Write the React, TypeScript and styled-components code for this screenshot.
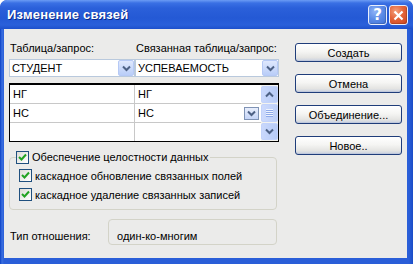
import React from "react";
import styled, { createGlobalStyle } from "styled-components";

const GlobalStyle = createGlobalStyle`
  html, body {
    margin: 0;
    padding: 0;
    background: #ffffff;
  }
  body {
    font-family: "Liberation Sans", Arial, sans-serif;
    font-size: 11px;
    color: #000;
  }
`;

const ChevronDown: React.FC = () => (
  <svg width="9" height="7" viewBox="0 0 9 7">
    <path d="M1 1.5 L4.5 5 L8 1.5" fill="none" stroke="#4d6185" strokeWidth="2" />
  </svg>
);

const ChevronUp: React.FC = () => (
  <svg width="9" height="7" viewBox="0 0 9 7">
    <path d="M1 5.5 L4.5 2 L8 5.5" fill="none" stroke="#4d6185" strokeWidth="2" />
  </svg>
);

const Tick: React.FC = () => (
  <svg width="9" height="9" viewBox="0 0 9 9">
    <path d="M1 4 L3.5 6.5 L8 1.5" fill="none" stroke="#22a322" strokeWidth="2" />
  </svg>
);

const App: React.FC = () => {
  const rows = [
    { left: "НГ", right: "НГ", picker: false },
    { left: "НС", right: "НС", picker: true },
    { left: "", right: "", picker: false },
  ];

  return (
    <>
      <GlobalStyle />
      <Window>
        <TitleBar>
          <Title>Изменение связей</Title>
          <TitleButtons>
            <CaptionButton>?</CaptionButton>
            <CaptionButton $close>
              <svg width="11" height="11" viewBox="0 0 11 11">
                <path d="M1.5 1.5 L9.5 9.5 M9.5 1.5 L1.5 9.5" stroke="#fff" strokeWidth="2.2" />
              </svg>
            </CaptionButton>
          </TitleButtons>
        </TitleBar>
        <Client>
          <LeftColumn>
            <TableHeads>
              <Label>Таблица/запрос:</Label>
              <Label>Связанная таблица/запрос:</Label>
              <Combo>
                <ComboText>СТУДЕНТ</ComboText>
                <ArrowButton>
                  <ChevronDown />
                </ArrowButton>
              </Combo>
              <Combo>
                <ComboText>УСПЕВАЕМОСТЬ</ComboText>
                <ArrowButton>
                  <ChevronDown />
                </ArrowButton>
              </Combo>
            </TableHeads>

            <FieldGrid>
              <Rows>
                {rows.map((r, i) => (
                  <Row key={i}>
                    <Cell $first>{r.left}</Cell>
                    <Cell>
                      <span>{r.right}</span>
                      {r.picker && (
                        <CellPicker>
                          <ChevronDown />
                        </CellPicker>
                      )}
                    </Cell>
                  </Row>
                ))}
              </Rows>
              <ScrollBar>
                <ScrollButton>
                  <ChevronUp />
                </ScrollButton>
                <ScrollThumb>
                  <Grip />
                  <Grip />
                  <Grip />
                  <Grip />
                </ScrollThumb>
                <ScrollButton>
                  <ChevronDown />
                </ScrollButton>
              </ScrollBar>
            </FieldGrid>

            <Group>
              <Legend>
                <CheckBox>
                  <Tick />
                </CheckBox>
                Обеспечение целостности данных
              </Legend>
              <CheckRow>
                <CheckBox>
                  <Tick />
                </CheckBox>
                каскадное обновление связанных полей
              </CheckRow>
              <CheckRow>
                <CheckBox>
                  <Tick />
                </CheckBox>
                каскадное удаление связанных записей
              </CheckRow>
            </Group>

            <TypeRow>
              <TypeLabel>Тип отношения:</TypeLabel>
              <TypeBox>один-ко-многим</TypeBox>
            </TypeRow>
          </LeftColumn>

          <ButtonColumn>
            <PushButton>Создать</PushButton>
            <PushButton>Отмена</PushButton>
            <PushButton>Объединение...</PushButton>
            <PushButton>Новое..</PushButton>
          </ButtonColumn>
        </Client>
      </Window>
    </>
  );
};

const Window = styled.div`
  width: 413px;
  height: 264px;
  display: flex;
  flex-direction: column;
  background: linear-gradient(90deg, #0a3fc4 0px, #3a6fe0 2px, #2a5ed8 4px, #2a5ed8 calc(100% - 4px), #1b4cc6 100%);
  border-radius: 7px 7px 0 0;
  box-sizing: border-box;
  overflow: hidden;
`;

const TitleBar = styled.div`
  height: 29px;
  flex: none;
  display: flex;
  align-items: center;
  justify-content: space-between;
  padding: 0 5px 0 7px;
  background: linear-gradient(
    180deg,
    #6c9cf4 0px,
    #3a70e4 3px,
    #2b60da 8px,
    #2459d5 18px,
    #2a60da 25px,
    #1d50cc 29px
  );
  border-radius: 7px 7px 0 0;
`;

const Title = styled.span`
  font-family: "Liberation Sans", Arial, sans-serif;
  font-weight: bold;
  font-size: 13px;
  color: #fff;
  text-shadow: 1px 1px 0 #0a2a8a;
  letter-spacing: 0.2px;
`;

const TitleButtons = styled.div`
  display: flex;
  gap: 2px;
  margin-top: 1px;
`;

const CaptionButton = styled.div<{ $close?: boolean }>`
  width: 19px;
  height: 20px;
  box-sizing: border-box;
  display: flex;
  align-items: center;
  justify-content: center;
  border: 1px solid #e8eefc;
  border-radius: 3px;
  color: #fff;
  font-family: "DejaVu Sans", sans-serif;
  font-weight: bold;
  font-size: 15px;
  background: ${(p) =>
    p.$close
      ? "radial-gradient(circle at 35% 30%, #f4a07c 0%, #e4653a 45%, #c9421c 100%)"
      : "radial-gradient(circle at 35% 30%, #8fb3f7 0%, #5a8ae6 50%, #3f72d8 100%)"};
  box-shadow: inset -1px -1px 0 rgba(0, 0, 0, 0.15);
`;

const Client = styled.div`
  flex: 1;
  margin: 0 6px 6px 4px;
  background: #ebebea;
  display: flex;
  gap: 16px;
  padding: 12px 4px 0 5px;
`;

const LeftColumn = styled.div`
  width: 270px;
  display: flex;
  flex-direction: column;
`;

const TableHeads = styled.div`
  display: grid;
  grid-template-columns: 126px 144px;
  row-gap: 4px;
`;

const Label = styled.div`
  height: 14px;
  line-height: 14px;
  padding-left: 1px;
  white-space: nowrap;
`;

const Combo = styled.div`
  height: 18px;
  background: #fff;
  border: 1px solid #b9c9dd;
  box-sizing: border-box;
  display: flex;
  align-items: center;
  justify-content: space-between;
  padding: 0 0 0 2px;
`;

const ComboText = styled.span`
  line-height: 14px;
`;

const ArrowButton = styled.div`
  width: 16px;
  height: 16px;
  box-sizing: border-box;
  display: flex;
  align-items: center;
  justify-content: center;
  border: 1px solid #b6c9f5;
  border-radius: 2px;
  background: linear-gradient(180deg, #dfe8fd, #b9cdf8);
`;

const FieldGrid = styled.div`
  margin-top: 6px;
  height: 59px;
  box-sizing: border-box;
  border: 1px solid #000;
  border-top-width: 2px;
  background: #fff;
  display: flex;
`;

const Rows = styled.div`
  flex: 1;
  display: flex;
  flex-direction: column;
`;

const Row = styled.div`
  height: 19px;
  display: grid;
  grid-template-columns: 125px 1fr;
  border-bottom: 1px solid #c8c8c8;
  &:last-child {
    border-bottom: none;
  }
`;

const Cell = styled.div<{ $first?: boolean }>`
  display: flex;
  align-items: center;
  justify-content: space-between;
  padding: 0 2px 0 3px;
  border-right: ${(p) => (p.$first ? "1px solid #c8c8c8" : "none")};
`;

const CellPicker = styled.div`
  width: 15px;
  height: 13px;
  box-sizing: border-box;
  display: flex;
  align-items: center;
  justify-content: center;
  border: 1px solid #7f93b5;
  background: linear-gradient(180deg, #e8eefc, #c5d5f8);
`;

const ScrollBar = styled.div`
  width: 17px;
  display: flex;
  flex-direction: column;
  gap: 1px;
  background: #f3f3ef;
  padding: 1px 0;
  box-sizing: border-box;
`;

const ScrollButton = styled.div`
  flex: 1;
  display: flex;
  align-items: center;
  justify-content: center;
  border: 1px solid #c3d3fb;
  border-radius: 2px;
  background: linear-gradient(90deg, #c9d8fc, #b7cbf6);
`;

const ScrollThumb = styled(ScrollButton)`
  flex-direction: column;
  gap: 1px;
  background: linear-gradient(90deg, #cddafd, #bccff8);
`;

const Grip = styled.div`
  width: 7px;
  height: 1px;
  background: #eef3fe;
  box-shadow: 0 1px 0 #8faaea;
`;

const Group = styled.fieldset`
  margin: 8px 2px 0 0;
  padding: 2px 8px 5px 9px;
  border: 1px solid #d3d3c8;
  border-radius: 4px;
  min-width: 0;
`;

const Legend = styled.legend`
  display: flex;
  align-items: center;
  gap: 3px;
  padding: 0 2px 0 0;
  margin-left: -3px;
  height: 14px;
`;

const CheckRow = styled.div`
  height: 19px;
  display: flex;
  align-items: center;
  gap: 3px;
`;

const CheckBox = styled.div`
  width: 13px;
  height: 13px;
  box-sizing: border-box;
  border: 1px solid #1f4f7e;
  background: linear-gradient(135deg, #dcdcd6, #ffffff);
  display: flex;
  align-items: center;
  justify-content: center;
  flex: none;
`;

const TypeRow = styled.div`
  margin-top: 9px;
  margin-right: 2px;
  display: flex;
  align-items: flex-end;
  justify-content: space-between;
`;

const TypeLabel = styled.div`
  line-height: 14px;
  padding-bottom: 2px;
  padding-left: 1px;
`;

const TypeBox = styled.div`
  width: 169px;
  height: 26px;
  box-sizing: border-box;
  border: 1px solid #d3d3c8;
  border-radius: 4px;
  padding: 9px 0 0 8px;
  line-height: 14px;
`;

const ButtonColumn = styled.div`
  width: 107px;
  padding-top: 2px;
  display: flex;
  flex-direction: column;
  gap: 12px;
`;

const PushButton = styled.div`
  height: 19px;
  box-sizing: border-box;
  border: 1px solid #1f3d7a;
  border-radius: 3px;
  display: flex;
  align-items: center;
  justify-content: center;
  background: linear-gradient(180deg, #ffffff 0%, #f5f5f3 45%, #e4e4e2 80%, #c8d0e0 100%);
  box-shadow: inset 0 -1px 0 #bfc8dc;
`;

export default App;
